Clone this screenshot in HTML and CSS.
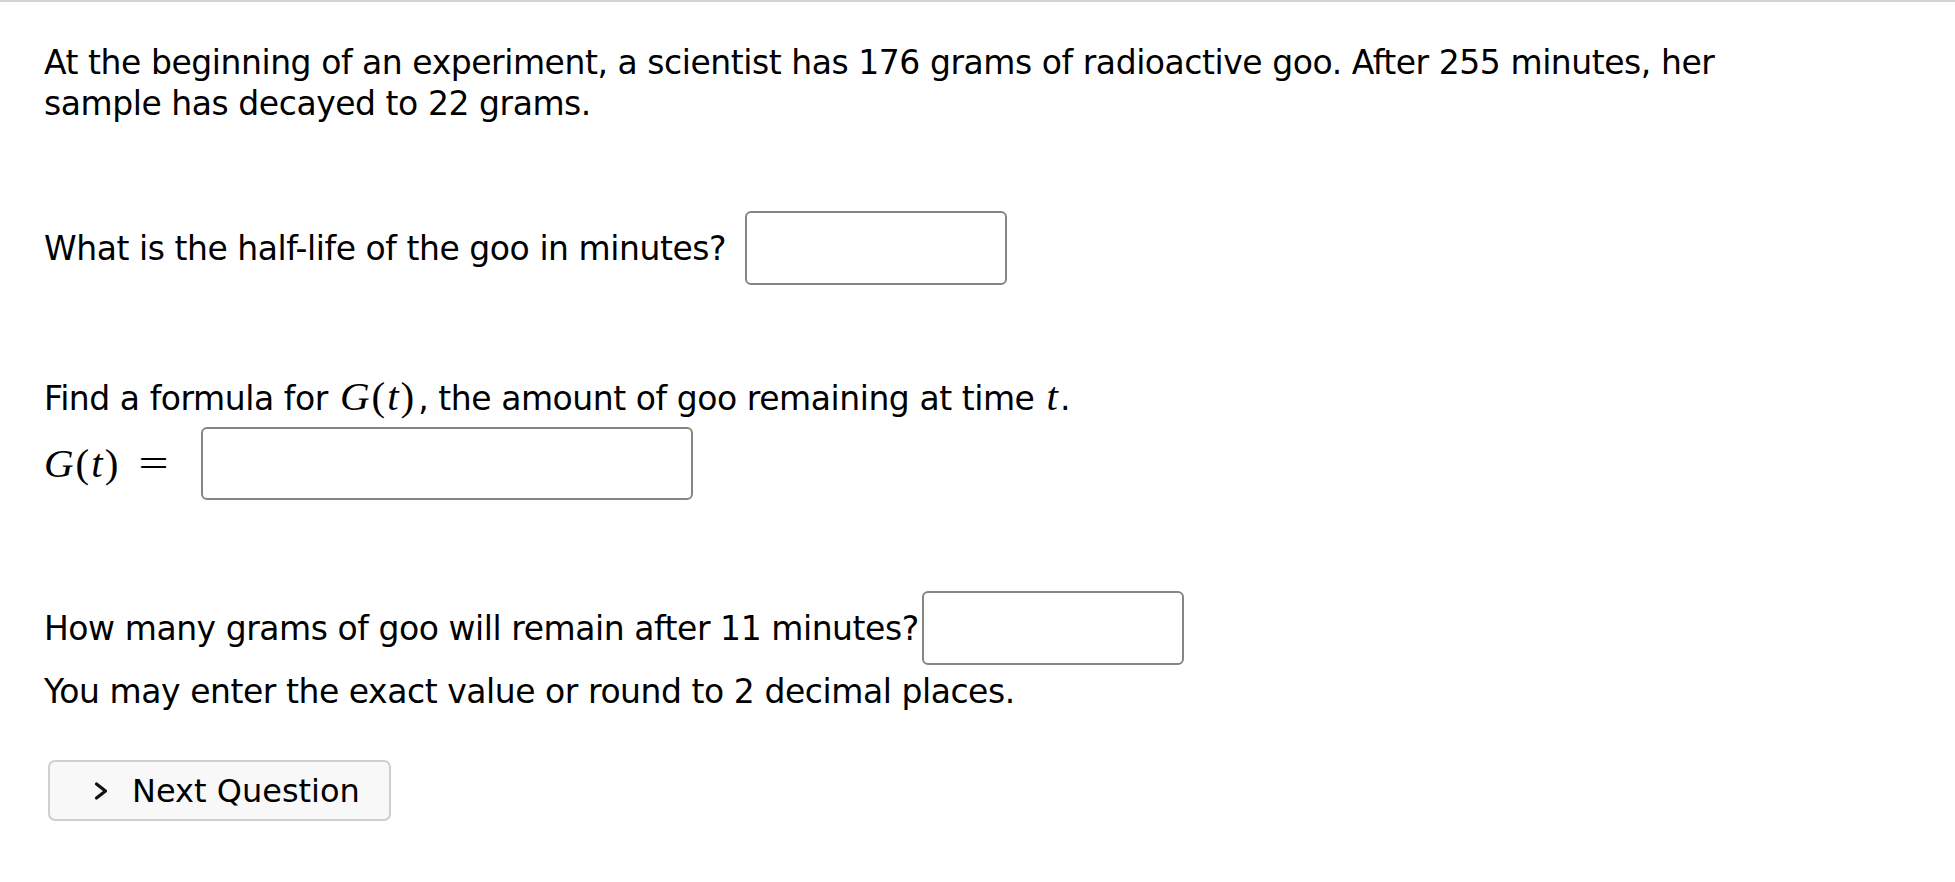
FILE: index.html
```html
<!DOCTYPE html>
<html>
<head>
<meta charset="utf-8">
<link rel="stylesheet" href="styles.css">
</head>
<body>
<div class="topline"></div>
<main class="question">
  <p class="intro">At the beginning of an experiment, a scientist has 176 grams of radioactive goo. After 255 minutes, her sample has decayed to 22 grams.</p>

  <div class="row q1">
    <span>What is the half-life of the goo in minutes?</span>
    <span class="answer small a1"></span>
  </div>

  <p class="formula">Find a formula for <span class="math inline"><span class="mi">G</span><span class="paren">(</span><span class="mi">t</span><span class="paren">)</span></span>, the amount of goo remaining at time <span class="math inline"><span class="mi">t</span></span>.</p>
  <div class="row q2">
    <span class="math"><span class="mi">G</span><span class="paren">(</span><span class="mi">t</span><span class="paren">)</span><span class="eq">=</span></span>
    <span class="answer wide"></span>
  </div>

  <div class="row q3">
    <span>How many grams of goo will remain after 11 minutes?</span>
    <span class="answer small a3"></span>
  </div>
  <p class="note">You may enter the exact value or round to 2 decimal places.</p>

  <button class="next">
    <svg class="chev" width="18" height="22" viewBox="0 0 18 22"><path d="M4.5 4 L13.5 11 L4.5 18" fill="none" stroke="#111" stroke-width="3.2" stroke-linecap="round" stroke-linejoin="round"/></svg>
    <span>Next Question</span>
  </button>
</main>
</body>
</html>
```
FILE: styles.css
```css
html, body {
  margin: 0;
  padding: 0;
  background: #fff;
}
body {
  font-family: "DejaVu Sans", sans-serif;
  font-size: 33px;
  line-height: 41px;
  letter-spacing: -0.45px;
  color: #000;
}
.topline {
  height: 2px;
  background: #d4d4d4;
}
.question {
  padding-left: 44px;
  width: 1780px;
}
p {
  margin: 0;
}
.intro {
  margin-top: 40px;
}
.row {
  display: flex;
  align-items: center;
}
.answer {
  display: inline-block;
  box-sizing: border-box;
  border: 2px solid #858585;
  border-radius: 6px;
  background: #fff;
  height: 74px;
}
.small {
  width: 262px;
}
.a1 {
  margin-left: 19px;
}
.a3 {
  margin-left: 3px;
}
.wide {
  width: 492px;
  height: 73px;
  margin-left: 36px;
}
.q1 {
  margin-top: 87px;
}
.formula {
  margin-top: 91px;
}
.q2 {
  margin-top: 8px;
}
.q3 {
  margin-top: 91px;
}
.note {
  margin-top: 6px;
}
.math {
  font-family: "Liberation Serif", "DejaVu Serif", serif;
  font-size: 41px;
  letter-spacing: 0;
}
.inline {
  margin: 0 2px 0 2px;
}
.mi {
  font-style: italic;
}
.paren {
  margin: 0 2px;
}
.eq {
  display: inline-block;
  margin-left: 22px;
  transform: scaleX(1.3);
}
.next {
  margin-top: 48px;
  margin-left: 4px;
  width: 343px;
  height: 61px;
  box-sizing: border-box;
  border: 2px solid #cfcfcf;
  border-radius: 7px;
  background: #f8f8f8;
  font-family: "DejaVu Sans", sans-serif;
  font-size: 32px;
  letter-spacing: 0;
  color: #000;
  display: flex;
  align-items: center;
  padding: 0 0 0 42px;
  gap: 22px;
}
.chev {
  flex: none;
}
```
